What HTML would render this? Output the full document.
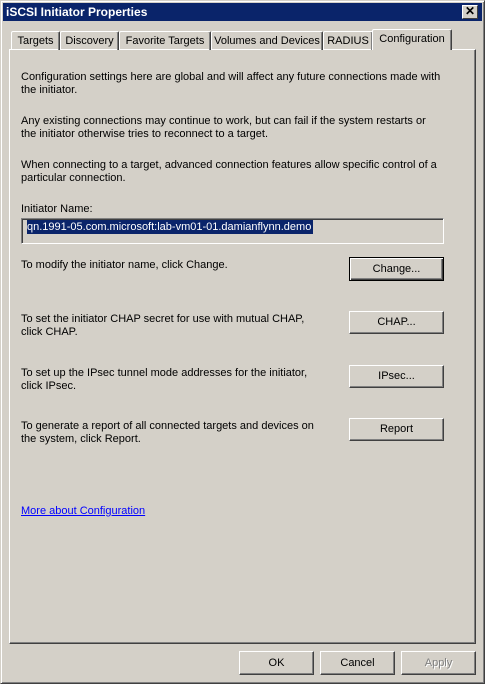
<!DOCTYPE html>
<html><head><style>
*{margin:0;padding:0;box-sizing:border-box}
body{width:485px;height:684px;background:#d4d0c8;font-family:"Liberation Sans",Tahoma,sans-serif;font-size:11px;color:#000;position:relative;overflow:hidden}
.abs{position:absolute}
.win{left:0;top:0;width:485px;height:684px;border:1px solid;border-color:#d4d0c8 #404040 #404040 #d4d0c8;box-shadow:inset 1px 1px #fff,inset -1px -1px #808080}
.title{left:3px;top:3px;width:479px;height:18px;background:#0a246a;color:#fff;font-weight:bold;font-size:12px;line-height:18px;padding-left:3px}
.x{left:462px;top:5px;width:16px;height:14px;background:#d4d0c8;border:1px solid;border-color:#fff #404040 #404040 #fff;font-size:12px;line-height:11px;text-align:center;color:#000;font-weight:bold}
.tab{top:31px;height:19px;border:1px solid;border-bottom:none;border-color:#fff #404040 #fff #fff;box-shadow:inset -1px 0 #808080;line-height:19px;text-align:center;border-radius:2px 2px 0 0}
.tab.sel{top:29px;height:21px;z-index:2;background:#d4d0c8;line-height:19px}
.panel{left:9px;top:49px;width:467px;height:595px;border:1px solid;border-color:#fff #404040 #404040 #fff;box-shadow:inset -1px -1px #808080}
.t{left:21px;line-height:13px;white-space:nowrap}
.btn{border:1px solid;border-color:#fff #404040 #404040 #fff;box-shadow:inset -1px -1px #808080;text-align:center;background:#d4d0c8}
.def{border:1px solid #000;box-shadow:inset 1px 1px #fff,inset -1px -1px #404040,inset -2px -2px #808080}
</style></head><body>
<div class="abs win"></div>
<div class="abs title">iSCSI Initiator Properties</div>
<div class="abs x">✕</div>
<div class="abs panel"></div>
<div class="abs tab" style="left:11px;width:49px">Targets</div>
<div class="abs tab" style="left:60px;width:59px">Discovery</div>
<div class="abs tab" style="left:119px;width:92px">Favorite Targets</div>
<div class="abs tab" style="left:211px;width:112px">Volumes and Devices</div>
<div class="abs tab" style="left:323px;width:50px">RADIUS</div>
<div class="abs tab sel" style="left:372px;width:80px">Configuration</div>

<div class="abs t" style="top:71px">Configuration settings here are global and will affect any future connections made with<br>the initiator.</div>
<div class="abs t" style="top:115px">Any existing connections may continue to work, but can fail if the system restarts or<br>the initiator otherwise tries to reconnect to a target.</div>
<div class="abs t" style="top:159px">When connecting to a target, advanced connection features allow specific control of a<br>particular connection.</div>
<div class="abs t" style="top:203px">Initiator Name:</div>
<div class="abs" style="left:21px;top:218px;width:423px;height:26px;border:1px solid;border-color:#808080 #fff #fff #808080;box-shadow:inset 1px 1px #404040"></div>
<div class="abs" style="left:27px;top:220px;width:286px;height:14px;background:#0a246a;color:#fff;line-height:14px;white-space:nowrap">qn.1991-05.com.microsoft:lab-vm01-01.damianflynn.demo</div>

<div class="abs t" style="top:259px">To modify the initiator name, click Change.</div>
<div class="abs btn def" style="left:349px;top:257px;width:95px;height:24px;line-height:22px">Change...</div>
<div class="abs t" style="top:313px">To set the initiator CHAP secret for use with mutual CHAP,<br>click CHAP.</div>
<div class="abs btn" style="left:349px;top:311px;width:95px;height:23px;line-height:21px">CHAP...</div>
<div class="abs t" style="top:367px">To set up the IPsec tunnel mode addresses for the initiator,<br>click IPsec.</div>
<div class="abs btn" style="left:349px;top:365px;width:95px;height:23px;line-height:21px">IPsec...</div>
<div class="abs t" style="top:420px">To generate a report of all connected targets and devices on<br>the system, click Report.</div>
<div class="abs btn" style="left:349px;top:418px;width:95px;height:23px;line-height:21px">Report</div>
<div class="abs t" style="top:505px;color:#0000ff;text-decoration:underline">More about Configuration</div>

<div class="abs btn" style="left:239px;top:651px;width:75px;height:24px;line-height:22px">OK</div>
<div class="abs btn" style="left:320px;top:651px;width:75px;height:24px;line-height:22px">Cancel</div>
<div class="abs btn" style="left:401px;top:651px;width:75px;height:24px;line-height:22px;color:#808080;text-shadow:1px 1px #fff">Apply</div>
</body></html>
